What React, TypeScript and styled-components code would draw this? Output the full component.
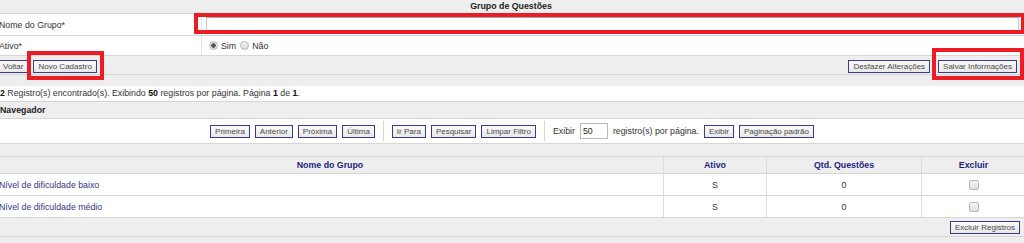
import React from "react";
import styled, { createGlobalStyle } from "styled-components";

const GlobalStyle = createGlobalStyle`
  html, body {
    margin: 0;
    padding: 0;
    background: #eeeeee;
    overflow: hidden;
  }
  body {
    font-family: "Liberation Sans", Arial, sans-serif;
    font-size: 8.8px;
    color: #333333;
  }
  * {
    box-sizing: border-box;
  }
`;

const rows = [
  { name: "Nível de dificuldade baixo", active: "S", count: 0 },
  { name: "Nível de dificuldade médio", active: "S", count: 0 }
];

const App = () => {
  return (
    <>
      <GlobalStyle />
      <Page>
        <Panel>
          <TitleBar>Grupo de Questões</TitleBar>
          <FormRow $height={22}>
            <Label>Nome do Grupo*</Label>
            <Field>
              <Marked>
                <TextInput type="text" />
                <Marker $top={-4} $left={-12} $right={-6} $bottom={-2} />
              </Marked>
            </Field>
          </FormRow>
          <FormRow $height={20}>
            <Label>Ativo*</Label>
            <Field>
              <RadioGroup>
                <RadioOption>
                  <Radio $checked />
                  Sim
                </RadioOption>
                <RadioOption>
                  <Radio />
                  Não
                </RadioOption>
              </RadioGroup>
            </Field>
          </FormRow>
          <ButtonBar>
            <ButtonGroup $gap={5}>
              <Button>Voltar</Button>
              <Marked>
                <Button>Novo Cadastro</Button>
                <Marker $top={-9} $left={-6} $right={-7} $bottom={-7} />
              </Marked>
            </ButtonGroup>
            <ButtonGroup $gap={8}>
              <Button>Desfazer Alterações</Button>
              <Marked>
                <Button>Salvar Informações</Button>
                <Marker $top={-12} $left={-6} $right={-7} $bottom={-7} />
              </Marked>
            </ButtonGroup>
          </ButtonBar>
        </Panel>

        <Spacer $height={11} />

        <InfoLine>
          <b>2</b> Registro(s) encontrado(s). Exibindo <b>50</b> registros por
          página. Página <b>1</b> de <b>1</b>.
        </InfoLine>

        <SectionTitle>Navegador</SectionTitle>
        <NavRow>
          <Button>Primeira</Button>
          <Button>Anterior</Button>
          <Button>Próxima</Button>
          <Button>Última</Button>
          <Divider />
          <Button>Ir Para</Button>
          <Button>Pesquisar</Button>
          <Button>Limpar Filtro</Button>
          <Divider />
          <span>Exibir</span>
          <PageInput type="text" defaultValue="50" />
          <span>registro(s) por página.</span>
          <Button>Exibir</Button>
          <Button>Paginação padrão</Button>
        </NavRow>

        <Spacer $height={12} />

        <Table>
          <HeaderRow>
            <HeadCell>Nome do Grupo</HeadCell>
            <HeadCell>Ativo</HeadCell>
            <HeadCell>Qtd. Questões</HeadCell>
            <HeadCell>Excluir</HeadCell>
          </HeaderRow>
          {rows.map((row) => (
            <BodyRow key={row.name}>
              <NameCell>{row.name}</NameCell>
              <Cell>{row.active}</Cell>
              <Cell>{row.count}</Cell>
              <Cell>
                <Checkbox />
              </Cell>
            </BodyRow>
          ))}
          <TableFooter>
            <Button>Excluir Registros</Button>
          </TableFooter>
        </Table>
      </Page>
    </>
  );
};

const Page = styled.div`
  width: 1028px;
  margin-left: -3px;
`;

const Panel = styled.section`
  display: flex;
  flex-direction: column;
`;

const TitleBar = styled.div`
  height: 14px;
  line-height: 13px;
  text-align: center;
  font-weight: bold;
  color: #222222;
  background: #eeeeee;
  border-bottom: 1px solid #d6d6d6;
`;

const FormRow = styled.div<{ $height: number }>`
  display: grid;
  grid-template-columns: 204px 1fr;
  height: ${(p) => p.$height}px;
  background: #ffffff;
  border-bottom: 1px solid #d6d6d6;
`;

const Label = styled.div`
  display: flex;
  align-items: center;
  padding-left: 2px;
  color: #333333;
`;

const Field = styled.div`
  display: flex;
  align-items: center;
  padding-left: 4px;
  border-left: 1px solid #e2e2e2;
`;

const Marked = styled.span`
  position: relative;
  display: inline-flex;
  flex: 0 1 auto;
`;

const Marker = styled.span<{
  $top: number;
  $left: number;
  $right: number;
  $bottom: number;
}>`
  position: absolute;
  top: ${(p) => p.$top}px;
  left: ${(p) => p.$left}px;
  right: ${(p) => p.$right}px;
  bottom: ${(p) => p.$bottom}px;
  border: 4px solid #ec1c24;
  pointer-events: none;
`;

const TextInput = styled.input`
  width: 813px;
  height: 15px;
  margin: 0;
  padding: 0 2px;
  border: 1px solid #c8c8c8;
  border-top-color: #a8a8a8;
  background: #ffffff;
  font: inherit;
`;

const RadioGroup = styled.div`
  display: flex;
  align-items: center;
  gap: 4px;
  padding-left: 3px;
`;

const RadioOption = styled.label`
  display: inline-flex;
  align-items: center;
  gap: 3px;
  color: #333333;
`;

const Radio = styled.span<{ $checked?: boolean }>`
  width: 9px;
  height: 9px;
  border-radius: 50%;
  border: 1px solid #b5b5b5;
  background: ${(p) =>
    p.$checked
      ? "radial-gradient(circle, #555 0 2px, #e6e6e6 2.5px)"
      : "linear-gradient(#f4f4f4, #dcdcdc)"};
`;

const ButtonBar = styled.div`
  display: flex;
  justify-content: space-between;
  align-items: center;
  height: 19px;
  padding: 2px 8px 0 1px;
  background: #eeeeee;
  border-bottom: 1px solid #d6d6d6;
`;

const ButtonGroup = styled.div<{ $gap: number }>`
  display: flex;
  align-items: center;
  gap: ${(p) => p.$gap}px;
`;

const Button = styled.button`
  height: 13px;
  margin: 0;
  padding: 0 4px;
  border: 1px solid #3a3a8e;
  background: linear-gradient(#fafafa, #e8e8e8);
  color: #4a4a4a;
  font-family: "Liberation Sans", Arial, sans-serif;
  font-size: 8px;
  line-height: 11px;
  white-space: nowrap;
`;

const Spacer = styled.div<{ $height: number }>`
  height: ${(p) => p.$height}px;
  background: #eeeeee;
`;

const InfoLine = styled.div`
  height: 15px;
  line-height: 15px;
  padding-left: 3px;
  background: #ffffff;
  color: #333333;

  b {
    color: #111111;
  }
`;

const SectionTitle = styled.div`
  height: 18px;
  line-height: 16px;
  padding-left: 3px;
  font-weight: bold;
  color: #222222;
  background: #eeeeee;
  border-top: 1px solid #d6d6d6;
  border-bottom: 1px solid #d6d6d6;
`;

const NavRow = styled.div`
  display: flex;
  justify-content: center;
  align-items: center;
  gap: 5px;
  height: 25px;
  padding-left: 2px;
  background: #ffffff;
  border-bottom: 1px solid #d6d6d6;
  color: #333333;
`;

const Divider = styled.span`
  width: 1px;
  height: 20px;
  margin: 0 3px;
  background: #d4d4d4;
`;

const PageInput = styled.input`
  width: 28px;
  height: 16px;
  margin: 0;
  padding: 0 2px;
  border: 1px solid #b8b8b8;
  font: inherit;
  color: #222222;
`;

const Table = styled.div`
  display: flex;
  flex-direction: column;
  border-top: 1px solid #d6d6d6;
`;

const tableColumns = "666px 103px 155px 104px";

const HeaderRow = styled.div`
  display: grid;
  grid-template-columns: ${tableColumns};
  height: 17px;
  background: #eeeeee;
  border-bottom: 1px solid #d6d6d6;
`;

const HeadCell = styled.div`
  display: flex;
  align-items: center;
  justify-content: center;
  font-weight: bold;
  color: #1e1e80;
  & + & {
    border-left: 1px solid #dcdcdc;
  }
`;

const BodyRow = styled.div`
  display: grid;
  grid-template-columns: ${tableColumns};
  height: 22px;
  background: #ffffff;
  border-bottom: 1px solid #d6d6d6;
`;

const Cell = styled.div`
  display: flex;
  align-items: center;
  justify-content: center;
  color: #333333;
  border-left: 1px solid #dcdcdc;
`;

const NameCell = styled.div`
  display: flex;
  align-items: center;
  padding-left: 2px;
  color: #34348a;
`;

const Checkbox = styled.span`
  width: 10px;
  height: 10px;
  border: 1px solid #b9b9b9;
  border-radius: 2px;
  background: linear-gradient(#f6f6f6, #dedede);
`;

const TableFooter = styled.div`
  display: flex;
  justify-content: flex-end;
  align-items: center;
  height: 19px;
  padding-right: 5px;
  background: #eeeeee;
  border-bottom: 1px solid #d6d6d6;
`;

export default App;
